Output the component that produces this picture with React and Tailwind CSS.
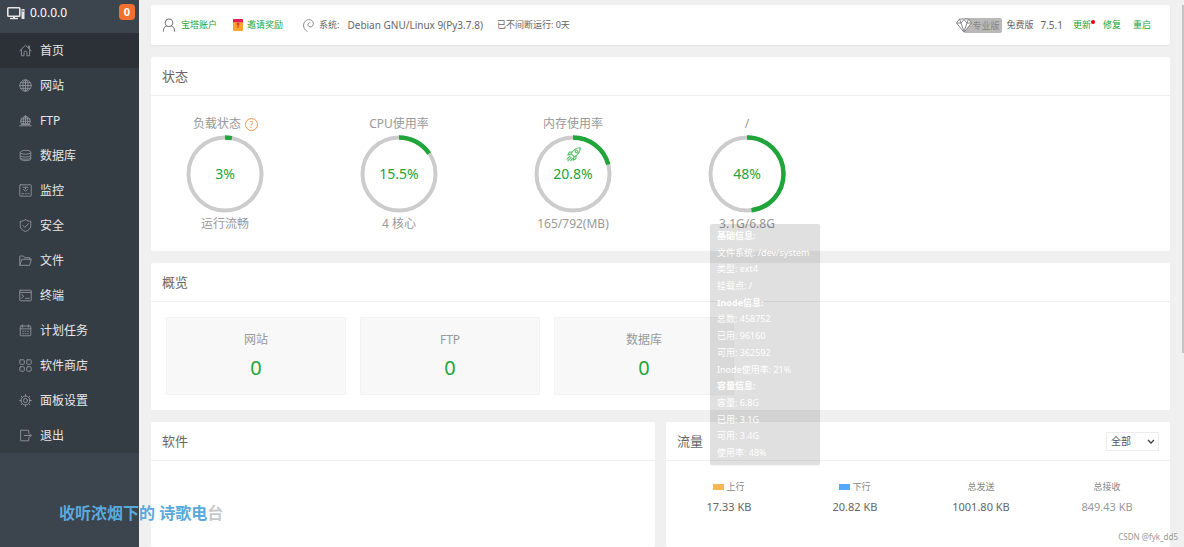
import React, { useState } from 'react';

// Line icons share one 16px box
const Icon = ({ children, className = 'h-[13px] w-[13px] text-[#8a9096]' }) => (
  <svg
    className={className}
    viewBox="0 0 16 16"
    fill="none"
    stroke="currentColor"
    strokeWidth="1.2"
    strokeLinecap="round"
    strokeLinejoin="round"
  >
    {children}
  </svg>
);

const MENU = [
  {
    name: '首页',
    icon: <path d="M.8 8.500L8 1.500L15.200 8.500M3 7v7.500h3.200V10.500a1.800 1.800 0 0 1 3.600 0V14.500H13V7M11.500 4.500V2.500H13V6" />
  },
  {
    name: '网站',
    icon: (
      <>
        <circle cx="8" cy="8" r="7" />
        <ellipse cx="8" cy="8" rx="3.2" ry="7" />
        <path d="M1 8h14M2 4.500h12M2 11.500h12M8 1v14" />
      </>
    )
  },
  {
    name: 'FTP',
    icon: (
      <>
        <path d="M2.500 11.500a6 6 0 1 1 11 0Z" />
        <path d="M5.500 11.500C4.500 8 5.500 4 8 2C10.500 4 11.500 8 10.500 11.500M8 2v9.500M2.500 6h11M2 9h12M.8 14.500h14.400M3 13h10" />
      </>
    )
  },
  {
    name: '数据库',
    icon: (
      <>
        <path d="M1.500 4C1.500 .8 14.500.8 14.500 4v8C14.500 15.200 1.500 15.200 1.500 12Z" />
        <path d="M1.500 5C4 7 12 7 14.500 5M1.500 8.500C4 10.500 12 10.500 14.500 8.500M1.500 11.500C4 13 12 13 14.500 11.500" />
      </>
    )
  },
  {
    name: '监控',
    icon: (
      <>
        <rect x="1" y="1" width="14" height="14" rx="0.5" />
        <path d="M5 4h6M8 4v2M5.500 6.500L8 9l2.500-2.500M3.500 12h2M7.500 12h1.500M11 12h1.500" />
      </>
    )
  },
  { name: '安全', icon: <path d="M8 .8C10 2.300 12 2.800 14.500 2.800V8.500C14.500 12 11 14.500 8 15.400C5 14.500 1.500 12 1.500 8.500V2.800C4 2.800 6 2.300 8 .8ZM4.800 7.800l2.400 2.500l4.300-4.500" /> },
  { name: '文件', icon: <path d="M1 13.500V2.500h4.500l1.500 2h6.500V6.500M1 13.500L3.500 6.500H15.300L13 13.500Z" /> },
  {
    name: '终端',
    icon: (
      <>
        <rect x="1" y="1.500" width="14" height="13" rx="0.5" />
        <path d="M1 4.200h14M3.500 7l2.500 2l-2.500 2M8 11.500h4.500" />
      </>
    )
  },
  {
    name: '计划任务',
    icon: (
      <>
        <rect x="1.500" y="2.500" width="13" height="12" rx="1" />
        <path d="M1.500 6h13M4.500 1v3M11.500 1v3M4.500 9h1M7.500 9h1M10.500 9h1M4.500 12h1M7.500 12h1M10.500 12h1" />
      </>
    )
  },
  {
    name: '软件商店',
    icon: (
      <>
        <rect x="1" y="1" width="5.500" height="5.500" rx="1" />
        <rect x="9.500" y="1" width="5.500" height="5.500" rx="1" />
        <rect x="1" y="9.500" width="5.500" height="5.500" rx="1" />
        <rect x="9.500" y="9.500" width="5.500" height="5.500" rx="1" />
      </>
    )
  },
  {
    name: '面板设置',
    icon: (
      <>
        <circle cx="8" cy="8" r="2.500" />
        <circle cx="8" cy="8" r="5.500" />
        <path d="M8 .8v1.700M8 13.500v1.700M.8 8h1.700M13.500 8h1.700M2.900 2.900l1.200 1.200M11.900 11.900l1.200 1.200M2.900 13.100l1.200-1.200M11.900 4.100l1.200-1.200" />
      </>
    )
  },
  { name: '退出', icon: <path d="M12 5V1.500H2V14.500H12V11M6.500 8H15M12.800 5.800L15 8l-2.200 2.200" /> }
];

const GAUGES = [
  { title: '负载状态', percent: 3, note: '运行流畅', help: true },
  { title: 'CPU使用率', percent: 15.5, note: '4 核心' },
  { title: '内存使用率', percent: 20.8, note: '165/792(MB)', rocket: true },
  { title: '/', percent: 48, note: '3.1G/6.8G', disk: true }
];

const DISK_INFO = [
  { text: '基础信息:', bold: true },
  { text: '文件系统: /dev/system' },
  { text: '类型: ext4' },
  { text: '挂载点: /' },
  { text: 'Inode信息:', bold: true },
  { text: '总数: 458752' },
  { text: '已用: 96160' },
  { text: '可用: 362592' },
  { text: 'Inode使用率: 21%' },
  { text: '容量信息:', bold: true },
  { text: '容量: 6.8G' },
  { text: '已用: 3.1G' },
  { text: '可用: 3.4G' },
  { text: '使用率: 48%' }
];

const COUNTS = [
  { name: '网站', value: 0 },
  { name: 'FTP', value: 0 },
  { name: '数据库', value: 0 }
];

const TRAFFIC = [
  { name: '上行', value: '17.33 KB', swatch: 'bg-[#f7b851]' },
  { name: '下行', value: '20.82 KB', swatch: 'bg-[#52a9ff]' },
  { name: '总发送', value: '1001.80 KB' },
  { name: '总接收', value: '849.43 KB', faded: true }
];

const Sidebar = () => (
  <aside className="w-[139px] shrink-0 bg-[#3c444d] text-white">
    <div className="flex h-[33px] items-start justify-between pt-1 pr-1 pl-[7px]">
      <div className="flex items-center gap-[5px] text-[12px] leading-[18px]">
        <svg className="h-[14px] w-[18px]" viewBox="0 0 18 14" fill="none" stroke="#e4e6e8">
          <rect x="0.8" y="1.8" width="12" height="8.4" rx="0.8" strokeWidth="1.6" />
          <path d="M3 12.500h8" strokeWidth="1.4" />
          <path d="M7 10v2" strokeWidth="2" />
          <rect x="14.500" y="3" width="3" height="10" fill="#e4e6e8" stroke="none" />
          <path d="M15 5h2" stroke="#3c444d" strokeWidth="0.8" />
        </svg>
        <span>0.0.0.0</span>
      </div>
      <span className="h-4 w-4 rounded bg-[#f0702f] text-center text-[11px] leading-4 font-bold">0</span>
    </div>
    <nav className="bg-[#343c44]">
      {MENU.map(({ name, icon }, index) => (
        <a
          key={name}
          href="#"
          className={`flex h-[35px] items-center gap-2 pl-[19px] text-[12px] leading-4 text-[#e6e7e8] ${index === 0 ? 'bg-[#2c3138]' : ''}`}
        >
          <Icon>{icon}</Icon>
          <span>{name}</span>
        </a>
      ))}
    </nav>
  </aside>
);

const TopBar = () => (
  <header className="flex h-10 items-center justify-between rounded-xs bg-white pr-[19px] pl-[11px] text-[9px] leading-4 text-[#666] shadow-xs">
    <div className="flex items-center">
      <Icon className="h-[14px] w-[14px] text-[#777]">
        <circle cx="8" cy="5.500" r="4.300" />
        <path d="M1.500 15.200C1.500 11.500 3.500 9.800 5.500 9M14.500 15.200C14.500 11.500 12.500 9.800 10.500 9" />
      </Icon>
      <a href="#" className="ml-[5px] text-[#20a53a]">宝塔账户</a>
      <svg className="ml-4 h-3 w-[10px]" viewBox="0 0 10 12">
        <rect width="10" height="12" rx="1" fill="#fba42c" />
        <path d="M0 1a1 1 0 0 1 1-1h8a1 1 0 0 1 1 1v2.200H0Z" fill="#e01f5a" />
        <circle cx="5" cy="5" r="1.500" fill="#d2452c" />
        <path d="M5 5v4" stroke="#d2452c" strokeWidth="1" />
      </svg>
      <a href="#" className="ml-1 text-[#20a53a]">邀请奖励</a>
      <svg className="ml-5 h-[13px] w-[11px]" viewBox="0 0 11 13" fill="none" stroke="#888" strokeWidth="1">
        <path d="M4.500 12.500C1.500 10.800 0 8 .8 4.800C1.600 1.500 5 0 7.800 1C10.500 2 11 5 9.500 7C8 8.500 5.500 8 5 6.300C4.700 4.800 5.800 3.500 7.300 3.700" />
      </svg>
      <span className="ml-[5px]">系统:</span>
      <span className="ml-2 text-[10px]">Debian GNU/Linux 9(Py3.7.8)</span>
      <span className="ml-[14px]">已不间断运行: 0天</span>
    </div>
    <div className="flex items-center">
      <svg className="relative z-10 -mr-2 h-[15px] w-4" viewBox="0 0 16 15" fill="none" stroke="#888" strokeWidth="1">
        <path d="M3.500 1h9L15.500 5L8 14.300L.5 5Z" fill="#fff" strokeLinejoin="round" />
        <path d="M.5 5h4.500l3 8.500L11 5h4.500M3.500 1L5 5L8 1.500L11 5L12.500 1" strokeLinejoin="round" />
      </svg>
      <span className="h-[15px] rounded-xs bg-[#b9b9b9] pr-[3px] pl-2 leading-[15px] text-[#858585]">专业版</span>
      <span className="ml-1">免费版</span>
      <span className="ml-[7px] text-[10px]">7.5.1</span>
      <button className="relative ml-[10px] text-[#20a53a]">
        更新
        <i className="absolute top-[3px] -right-1 h-1 w-1 rounded-full bg-red-600" />
      </button>
      <button className="ml-3 text-[#20a53a]">修复</button>
      <button className="ml-3 text-[#20a53a]">重启</button>
    </div>
  </header>
);

const Panel = ({ title, action, className = '', children }) => (
  <section className={`rounded-xs bg-white ${className}`}>
    <div className="flex h-[39px] items-center justify-between border-b border-[#f0f0f0] px-[11px]">
      <h2 className="text-[13px] leading-5 text-[#666]">{title}</h2>
      {action}
    </div>
    {children}
  </section>
);

const DiskTooltip = () => (
  <ul
    role="tooltip"
    className="absolute top-[108px] left-[18px] z-10 flex h-[241px] w-[110px] flex-col justify-between rounded-xs bg-black/12 py-[6px] pl-[7px] text-[9px] leading-3 whitespace-nowrap text-white shadow-xs"
  >
    {DISK_INFO.map((row, index) => (
      <li key={index} className={row.bold ? 'font-bold' : ''}>{row.text}</li>
    ))}
  </ul>
);

const Gauge = ({ title, percent, note, help, rocket, disk }) => (
  <div className="relative flex w-[110px] flex-col items-center text-[12px] leading-4 text-[#999]">
    <div className="flex items-center gap-1">
      <span>{title}</span>
      {help && (
        <button
          aria-label="负载说明"
          className="-mr-px h-[13px] w-[13px] rounded-full border border-[#f3964d] text-center text-[9px] leading-[11px] text-[#f3964d]"
        >
          ?
        </button>
      )}
    </div>
    <div className="relative my-[3px] flex h-[78px] w-[78px] items-center justify-center">
      <svg className="absolute inset-0" viewBox="0 0 78 78" fill="none" strokeWidth="4">
        <circle cx="39" cy="39" r="36.500" stroke="#ccc" />
        <circle
          cx="39"
          cy="39"
          r="36.500"
          stroke="#20a53a"
          strokeWidth="4.500"
          pathLength="100"
          strokeDasharray={`${percent} 100`}
          transform="rotate(-90 39 39)"
        />
      </svg>
      {rocket && (
        <Icon className="absolute top-3 left-8 h-[15px] w-[15px] text-[#58bd6b]">
          <path d="M15.300.8C11 .8 8 3 5.500 7L9 10.500C13 8 15.300 5 15.300.8ZM7 5.200L3.500 5.500L2 8.500L5.500 7.500M10.800 9L10.500 12.500L7.500 14L8.500 10.500M4.500 9.500L1 13M5.500 11L2 14.800M7 12l-2 2.500" />
          <circle cx="11.200" cy="4.800" r="1.300" />
        </Icon>
      )}
      <span className="text-[14px] leading-5 text-[#20a53a]">{percent}%</span>
    </div>
    <div>{note}</div>
    {disk && <DiskTooltip />}
  </div>
);

const App = () => {
  const [network, setNetwork] = useState('全部');

  return (
    <div className="relative flex h-screen overflow-hidden bg-[#f0f0f0] font-['Noto_Sans','Noto_Sans_CJK_SC',sans-serif]">
      <Sidebar />

      <main className="flex min-w-0 flex-1 flex-col gap-3 pt-[5px] pr-[14px] pl-3">
        <TopBar />

        {/* Server status */}
        <Panel title="状态" className="shrink-0">
          <div className="flex gap-16 pt-5 pb-[19px] pl-[19px]">
            {GAUGES.map((gauge) => (
              <Gauge key={gauge.title} {...gauge} />
            ))}
          </div>
        </Panel>

        {/* Overview counters */}
        <Panel title="概览" className="shrink-0">
          <div className="flex gap-[14px] p-[15px]">
            {COUNTS.map((item) => (
              <div key={item.name} className="flex h-[78px] w-[180px] flex-col items-center border border-[#f3f3f3] bg-[#f8f8f8] pt-3">
                <span className="text-[12px] leading-5 text-[#999]">{item.name}</span>
                <a href="#" className="mt-1 text-[20px] leading-7 text-[#20a53a]">{item.value}</a>
              </div>
            ))}
          </div>
        </Panel>

        <div className="grid flex-1 grid-cols-2 gap-[11px]">
          <Panel title="软件" />
          <Panel
            title="流量"
            action={
              <div className="relative text-[10px] text-[#555]">
                <select
                  aria-label="网络接口"
                  value={network}
                  onChange={(e) => setNetwork(e.target.value)}
                  className="h-[19px] w-[53px] appearance-none border border-[#ececec] bg-white pl-1 leading-4"
                >
                  <option>全部</option>
                  <option>eth0</option>
                </select>
                <svg className="pointer-events-none absolute top-[7px] right-1 h-[6px] w-2" viewBox="0 0 8 6" fill="none" stroke="#444" strokeWidth="1.4">
                  <path d="M1 1l3 3l3-3" />
                </svg>
              </div>
            }
          >
            <div className="grid grid-cols-4 pt-[18px] text-center">
              {TRAFFIC.map((item) => (
                <div key={item.name}>
                  <div className="flex items-center justify-center gap-[2px] text-[9px] leading-4 text-[#888]">
                    {item.swatch && <i className={`h-[6px] w-[11px] ${item.swatch}`} />}
                    <span>{item.name}</span>
                  </div>
                  <div className={`mt-1 text-[11px] leading-4 ${item.faded ? 'text-[#999]' : 'text-[#666]'}`}>{item.value}</div>
                </div>
              ))}
            </div>
          </Panel>
        </div>
      </main>

      {/* Scrollbar thumb */}
      <div className="absolute top-[5px] right-0 h-[348px] w-[2px] bg-[#c4c4c4]" />

      {/* Floating lyric caption */}
      <p className="absolute top-[502px] left-[59px] text-[16px] leading-[22px] font-semibold text-[#5aa9dc]">
        收听浓烟下的 诗歌电<span className="text-[#c8c8cc]">台</span>
      </p>
      <p className="absolute right-[6px] bottom-[2px] text-[8px] leading-4 text-[#999]">CSDN @fyk_dd5</p>
    </div>
  );
};

export default App;
